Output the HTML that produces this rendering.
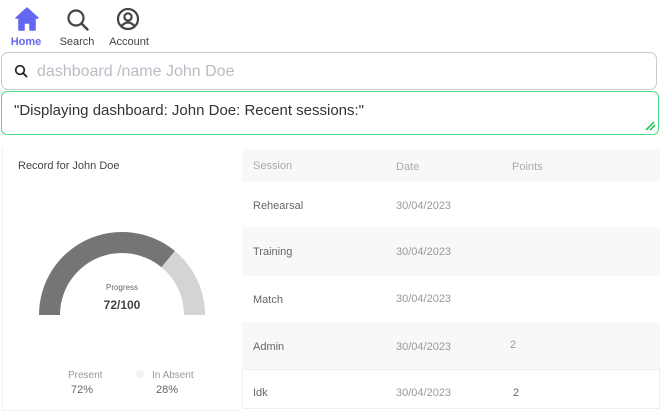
<!DOCTYPE html>
<html><head><meta charset="utf-8"><style>
*{box-sizing:border-box;margin:0;padding:0}
body{width:660px;height:411px;background:#fff;font-family:"Liberation Sans",sans-serif;position:relative;overflow:hidden}
.a{position:absolute}
.nav{font-size:11px;color:#444;text-align:center}
.row{position:absolute;left:242px;width:418px;font-size:11px;color:#666}
.row span{position:absolute}
</style></head><body>
<svg class="a" style="left:13px;top:6px" width="28" height="26" viewBox="0 0 28 26"><path d="M14 2 L25 12 L22 12 L22 24 L17 24 L17 17 L11 17 L11 24 L6 24 L6 12 L3 12 Z" fill="#6366f1" stroke="#6366f1" stroke-width="1.5" stroke-linejoin="round"/></svg>
<div class="a nav" style="left:8px;top:36px;width:36px;color:#6366f1;font-weight:bold">Home</div>
<svg class="a" style="left:66px;top:8px" width="24" height="24" viewBox="0 0 24 24"><circle cx="10" cy="10" r="7.5" fill="none" stroke="#444" stroke-width="2.2"/><path d="M15.5 15.5 L21.5 21.5" stroke="#444" stroke-width="2.4" stroke-linecap="round"/></svg>
<div class="a nav" style="left:57px;top:36px;width:40px">Search</div>
<svg class="a" style="left:116px;top:7px" width="24" height="24" viewBox="0 0 24 24"><circle cx="12" cy="12" r="10" fill="none" stroke="#444" stroke-width="2.2"/><circle cx="12" cy="10" r="3.6" fill="none" stroke="#444" stroke-width="2.2"/><path d="M5.5 19 Q12 12 18.5 19" fill="none" stroke="#444" stroke-width="2.2"/></svg>
<div class="a nav" style="left:106px;top:36px;width:46px">Account</div>
<div class="a" style="left:1px;top:52px;width:656px;height:38px;border:1px solid #c7cad1;border-radius:7px"></div>
<svg class="a" style="left:14px;top:64px" width="14" height="14" viewBox="0 0 14 14"><circle cx="6" cy="6" r="4.3" fill="none" stroke="#222" stroke-width="1.7"/><path d="M9 9 L12.5 12.5" stroke="#222" stroke-width="1.9" stroke-linecap="round"/></svg>
<div class="a" style="left:37px;top:63px;font-size:16px;color:#b8bcc4">dashboard /name John Doe</div>
<div class="a" style="left:1px;top:91px;width:658px;height:44px;border:1px solid #4ade80;border-radius:6px"></div>
<div class="a" style="left:14px;top:102px;font-size:15px;color:#333">"Displaying dashboard: John Doe: Recent sessions:"</div>
<svg class="a" style="left:644px;top:119px" width="12" height="12"><path d="M2 11 L10 3 M6 11 L11 6" stroke="#22c55e" stroke-width="1.6"/></svg>
<div class="a" style="left:2px;top:148px;width:238px;height:263px;border-left:1px solid #f0f0f0;border-bottom:1px solid #f0f0f0"></div>
<div class="a" style="left:18px;top:160px;font-size:11px;color:#444">Record for John Doe</div>
<svg class="a" style="left:0;top:200px" width="240" height="130"><path d="M39 115 A83 83 0 0 1 174.9 51 L161.5 67.2 A62 62 0 0 0 60 115 Z" fill="#757575"/><path d="M174.9 51 A83 83 0 0 1 205 115 L184 115 A62 62 0 0 0 161.5 67.2 Z" fill="#d4d4d4"/></svg>
<div class="a" style="left:82px;top:283px;width:80px;text-align:center;font-size:8px;color:#666">Progress</div>
<div class="a" style="left:82px;top:298px;width:80px;text-align:center;font-size:12px;font-weight:bold;color:#444">72/100</div>
<div class="a" style="left:68px;top:370px;font-size:10px;color:#999">Present</div>
<div class="a" style="left:71px;top:384px;font-size:11px;color:#666">72%</div>
<div class="a" style="left:136px;top:370px;width:8px;height:8px;border-radius:50%;background:#f0f1f5"></div>
<div class="a" style="left:152px;top:370px;font-size:10px;color:#999">In Absent</div>
<div class="a" style="left:156px;top:384px;font-size:11px;color:#666">28%</div>
<div class="row" style="top:149px;height:33px;background:#f8f8f8;color:#aaa"><span style="left:11px;top:11px">Session</span><span style="left:154px;top:12px">Date</span><span style="left:270px;top:12px">Points</span></div>
<div class="row" style="top:182px;height:45px;background:#fff"><span style="left:11px;top:18px">Rehearsal</span><span style="left:154px;top:18px;color:#999">30/04/2023</span></div>
<div class="row" style="top:227px;height:49px;background:#f8f8f8"><span style="left:11px;top:19px">Training</span><span style="left:154px;top:19px;color:#999">30/04/2023</span></div>
<div class="row" style="top:276px;height:46px;background:#fff"><span style="left:11px;top:18px">Match</span><span style="left:154px;top:17px;color:#999">30/04/2023</span></div>
<div class="row" style="top:322px;height:47px;background:#f8f8f8"><span style="left:11px;top:19px">Admin</span><span style="left:154px;top:19px;color:#999">30/04/2023</span><span style="left:268px;top:17px;color:#999">2</span></div>
<div class="row" style="top:369px;height:40px;background:#fff;border:1px solid #eee"><span style="left:10px;top:17px">Idk</span><span style="left:153px;top:17px;color:#999">30/04/2023</span><span style="left:270px;top:17px">2</span></div>
</body></html>
